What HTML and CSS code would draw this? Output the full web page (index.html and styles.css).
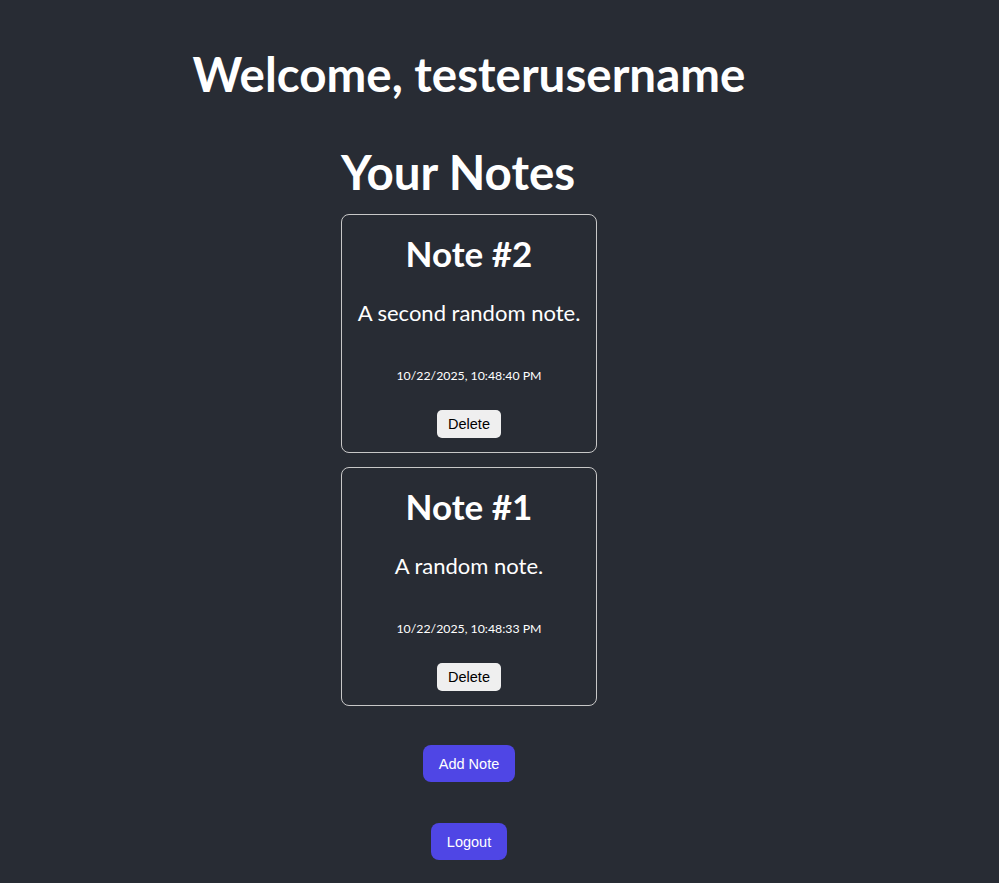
FILE: index.html
```html
<!DOCTYPE html>
<html lang="en">
<head>
<meta charset="utf-8">
<title>Notes</title>
<link rel="stylesheet" href="styles.css">
</head>
<body>
<div class="app">
  <h1 class="welcome">Welcome, testerusername</h1>
  <section class="notes">
    <h2 class="notes-title">Your Notes</h2>
    <div class="note-list">
      <div class="note">
        <h3 class="note-title">Note #2</h3>
        <p class="note-body">A second random note.</p>
        <p class="note-date">10/22/2025, 10:48:40 PM</p>
        <button class="btn-delete">Delete</button>
      </div>
      <div class="note">
        <h3 class="note-title">Note #1</h3>
        <p class="note-body">A random note.</p>
        <p class="note-date">10/22/2025, 10:48:33 PM</p>
        <button class="btn-delete">Delete</button>
      </div>
    </div>
  </section>
  <button class="btn-primary btn-add">Add Note</button>
  <button class="btn-primary btn-logout">Logout</button>
</div>
</body>
</html>
```
FILE: styles.css
```css
html, body {
  margin: 0;
  padding: 0;
  background: #282c34;
  min-height: 100%;
}
body {
  font-family: Lato, "Open Sans", sans-serif;
  color: #ffffff;
}
.app {
  width: 938px;
  display: flex;
  flex-direction: column;
  align-items: center;
  padding-top: 45px;
}
.welcome {
  margin: 0;
  font-size: 47.5px;
  font-weight: 700;
  line-height: 58px;
}
.notes {
  width: 256px;
  margin-top: 40px;
}
.notes-title {
  margin: 0;
  font-size: 47.5px;
  font-weight: 700;
  line-height: 58px;
  white-space: nowrap;
  text-align: left;
}
.note-list {
  display: flex;
  flex-direction: column;
  gap: 14px;
  margin-top: 13px;
}
.note {
  border: 1px solid #c8c8c8;
  border-radius: 8px;
  display: flex;
  flex-direction: column;
  align-items: center;
  text-align: center;
  padding: 18px 0 14px;
}
.note-title {
  margin: 0;
  font-size: 35px;
  font-weight: 700;
  line-height: 40px;
}
.note-body {
  margin: 25px 0 0;
  font-size: 22px;
  line-height: 30px;
}
.note-date {
  margin: 40px 0 0;
  font-size: 12.3px;
  line-height: 16px;
}
.btn-delete {
  margin-top: 26px;
  font-family: "Liberation Sans", Arial, sans-serif;
  font-size: 14.5px;
  color: #000;
  background: #efefef;
  border: none;
  border-radius: 5px;
  width: 64px;
  height: 28px;
  padding: 0;
}
.btn-primary {
  font-family: "Liberation Sans", Arial, sans-serif;
  font-size: 14.5px;
  color: #fff;
  background: #4f46e5;
  border: none;
  border-radius: 8px;
  height: 37px;
  padding: 0 16px;
}
.btn-add {
  margin-top: 39px;
}
.btn-logout {
  margin-top: 41px;
}
```
